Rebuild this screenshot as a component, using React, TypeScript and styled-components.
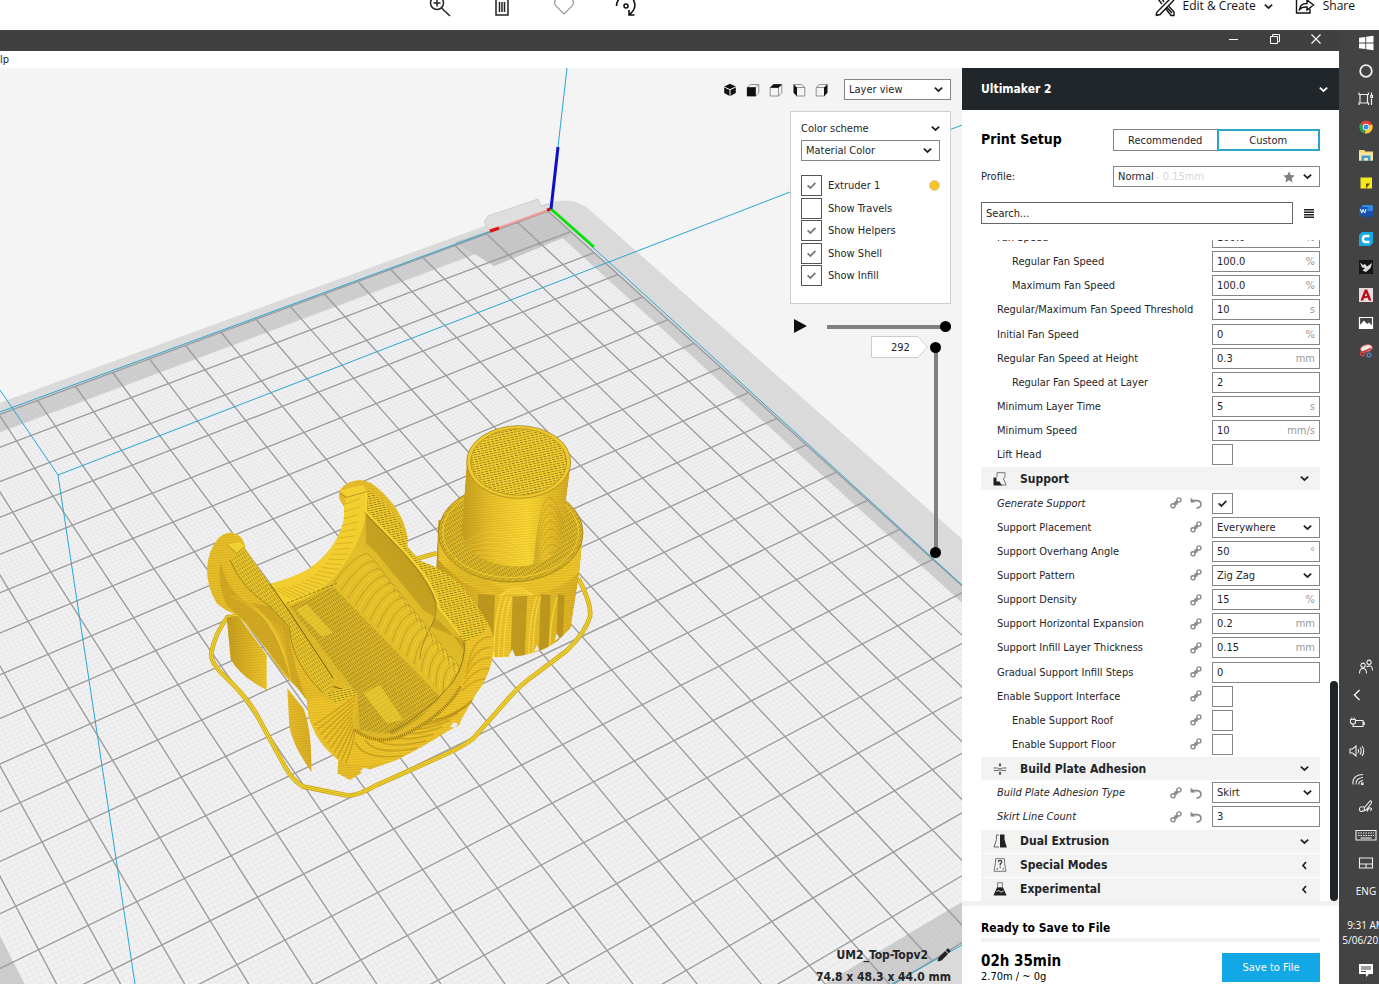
import React from "react";
import styled, { createGlobalStyle } from "styled-components";

const UI = '"DejaVu Sans Condensed", "Noto Sans", sans-serif';
const SYS = '"Open Sans", "Noto Sans", sans-serif';

const GlobalStyle = createGlobalStyle`
  *, *::before, *::after { box-sizing: border-box; }
  body { margin: 0; overflow: hidden; background: #fff; font-family: ${UI}; font-size: 11px; color: #1f2528; }
  button, input, select { font: inherit; color: inherit; margin: 0; padding: 0; border: 0; background: none; outline: none; border-radius: 0; }
  svg { display: block; flex: none; }
  h1, h2, p { margin: 0; }
`;

/* ---------- frame ---------- */
const Page = styled.div`
  display: flex;
  flex-direction: column;
  height: 100vh;
`;
const PhotoBar = styled.header`
  display: flex;
  flex: none;
  height: 30px;
  align-items: flex-start;
  justify-content: flex-end;
  padding-right: 24px;
  font-family: ${SYS};
  font-size: 12px;
  color: #111;
`;
const PhotoTools = styled.div`
  display: flex;
  flex: 1;
  justify-content: center;
  gap: 38px;
  padding-right: 88px;
`;
const PhotoButton = styled.button`
  display: flex;
  align-items: center;
  gap: 8px;
  height: 12px;
  line-height: 12px;
  & + & { margin-left: 22px; }
  & > svg:first-child { align-self: flex-start; }
`;
const IconButton = styled.button`
  display: flex;
  align-items: center;
  justify-content: center;
`;
const Desktop = styled.div`
  display: flex;
  flex: 1;
  min-height: 0;
`;
const AppWindow = styled.div`
  display: flex;
  flex-direction: column;
  flex: 1;
  min-width: 0;
`;
const TitleBar = styled.div`
  display: flex;
  flex: none;
  height: 21px;
  align-items: center;
  justify-content: flex-end;
  gap: 31px;
  padding: 0 18px 3px 0;
  background: #404040;
`;
const MenuBar = styled.nav`
  flex: none;
  height: 17px;
  line-height: 17px;
  background: #fff;
`;
const Workspace = styled.div`
  display: flex;
  flex: 1;
  min-height: 0;
`;

/* ---------- shared controls ---------- */
const SelectBox = styled.span<{ $w?: number }>`
  position: relative;
  display: flex;
  align-items: center;
  width: ${(p) => (p.$w ? p.$w + "px" : "100%")};
  height: 21px;
  border: 1px solid #868686;
  background: #fff;
  select { appearance: none; width: 100%; height: 100%; padding-left: 4px; }
  svg { position: absolute; right: 7px; pointer-events: none; }
`;
const Aside = styled.span`
  position: absolute;
  left: 42px;
  color: #d6d6d6;
  pointer-events: none;
`;
const StarSlot = styled.span`
  position: absolute;
  right: 24px;
  pointer-events: none;
  svg { position: static; }
`;
const CheckWrap = styled.span`
  display: grid;
  width: 21px;
  height: 21px;
  place-items: center;
  & > * { grid-area: 1 / 1; }
  input { appearance: none; width: 21px; height: 21px; border: 1px solid #868686; background: #fff; }
  svg { pointer-events: none; z-index: 1; }
`;

const Chevron = ({ color = "#222", left = false }: { color?: string; left?: boolean }) => (
  <svg width="9" height="9" viewBox="0 0 9 9" fill="none" stroke={color} strokeWidth="1.7">
    {left ? <path d="M6 1 L3 4.5 L6 8" /> : <path d="M.8 2.6 L4.5 6 L8.2 2.6" />}
  </svg>
);
function Select({ id, value, w, label, children }: { id?: string; value: string; w?: number; label?: string; children?: React.ReactNode }) {
  return (
    <SelectBox $w={w}>
      <select id={id} aria-label={label} defaultValue={value}>
        <option>{value}</option>
      </select>
      {children}
      <Chevron />
    </SelectBox>
  );
}
function Check({ id, on, color = "#222" }: { id: string; on?: boolean; color?: string }) {
  return (
    <CheckWrap>
      <input type="checkbox" id={id} defaultChecked={on} />
      {on && (
        <svg width="9" height="9" viewBox="0 0 9 9" fill="none" stroke={color} strokeWidth="1.8">
          <path d="M.6 4.4 L3.4 7 L8.4 1.8" />
        </svg>
      )}
    </CheckWrap>
  );
}

/* ---------- 3D viewport ---------- */
const Viewport = styled.main`
  position: relative;
  flex: 1;
  min-width: 0;
  overflow: hidden;
  background: #f4f4f4;
`;
const Scene = styled.svg`
  position: absolute;
  inset: 0;
  width: 100%;
  height: 100%;
`;
const Overlay = styled.div`
  position: relative;
  display: flex;
  flex-direction: column;
  align-items: flex-end;
  height: 100%;
  padding: 11px 11px 0 0;
`;
const ViewTools = styled.div`
  display: flex;
  align-items: center;
  gap: 9px;
  margin-bottom: 11px;
  & > span { margin-left: 6px; }
`;
const Legend = styled.section`
  width: 161px;
  height: 193px;
  padding: 9px 10px;
  border: 1px solid #cfcfcf;
  background: #fff;
`;
const LegendHead = styled.div`
  display: flex;
  align-items: center;
  justify-content: space-between;
  height: 14px;
  margin-bottom: 5px;
`;
const LegendList = styled.div`
  display: flex;
  flex-direction: column;
  justify-content: space-between;
  height: 111px;
  margin-top: 14px;
  input { border-color: #555; }
`;
const LegendRow = styled.div`
  display: flex;
  align-items: center;
  gap: 6px;
`;
const Swatch = styled.i`
  width: 11px;
  height: 11px;
  margin-left: auto;
  border: 1px solid #d8d0b0;
  border-radius: 50%;
  background: #f9c22b;
`;
const thumb = `
  appearance: none;
  width: 11px;
  height: 11px;
  border-radius: 50%;
  background: #000;
  pointer-events: auto;
`;
const PlayRow = styled.div`
  display: flex;
  align-items: center;
  gap: 20px;
  height: 22px;
  margin-top: 11px;
`;
const PathRange = styled.input`
  appearance: none;
  width: 124px;
  height: 11px;
  background: linear-gradient(#808080, #808080) 0 4px / 100% 4px no-repeat;
  &::-webkit-slider-thumb { ${thumb} }
`;
const LayerRow = styled.div`
  display: flex;
  gap: 1px;
  padding-right: 10px;
  margin-top: -1px;
`;
const LayerTag = styled.output`
  display: grid;
  height: 22px;
  align-items: center;
  & > * { grid-area: 1 / 1; }
  span { z-index: 1; padding-left: 20px; }
`;
const LayerSlider = styled.div`
  position: relative;
  width: 11px;
  height: 216px;
  margin-top: 6px;
  background: linear-gradient(#808080, #808080) 4px 5px / 4px 205px no-repeat;
`;
const LayerRange = styled.input`
  position: absolute;
  inset: 0;
  appearance: none;
  writing-mode: vertical-lr;
  direction: rtl;
  width: 11px;
  height: 216px;
  pointer-events: none;
  &::-webkit-slider-thumb { ${thumb} }
`;
const JobInfo = styled.div`
  display: flex;
  flex-direction: column;
  align-items: flex-end;
  margin-top: auto;
  font-size: 12px;
  font-weight: bold;
  line-height: 22px;
  height: 40px;
  div { display: flex; align-items: center; gap: 9px; }
`;

type Pt = [number, number];
/* projects build-plate cell coordinates (i to the left, j to the front) on the screen */
const project = (i: number, j: number): Pt => {
  const a = -0.00725 * i;
  const b = -0.0131 * j;
  const w = 1 + a + b;
  return [(548 + 4731 * a - 1165 * b) / w, (211 - 1341 * a - 1340 * b) / w];
};
const fmt = (p: Pt) => p[0].toFixed(1) + " " + p[1].toFixed(1);
const seg = (p: Pt, q: Pt) => "M" + fmt(p) + "L" + fmt(q);
const poly = (pts: Pt[]) => "M" + pts.map(fmt).join("L") + "Z";
const rect = (i0: number, j0: number, i1: number, j1: number) =>
  poly([project(i0, j0), project(i1, j0), project(i1, j1), project(i0, j1)]);

const NI = 22;
const NJ = 21;
function gridPath(step: number) {
  let d = "";
  for (let k = 0; k <= NI / step; k++) d += seg(project(k * step, 0), project(k * step, NJ));
  for (let k = 0; k <= NJ / step; k++) d += seg(project(0, k * step), project(NI, k * step));
  return d;
}
const MAJOR = gridPath(1);
const MINOR = gridPath(0.1);

const range = (n: number) => Array.from({ length: n }, (_, k) => k);

const BODY =
  "M85 385 Q105 366 130 369 Q155 374 165 405 L162 420 L240 522 Q300 508 355 478 Q440 420 462 330 L462 290 Q440 262 450 240 Q470 212 510 210 Q540 212 560 232 Q640 300 652 380 L652 410 L690 452 Q760 475 820 532 L862 590 L893 636 Q915 680 912 715 Q905 790 860 850 L830 885 L808 945 L770 965 Q700 1010 620 1050 L520 1085 L480 1110 L442 1090 L445 1050 Q380 1000 356 920 L350 870 L320 832 Q270 790 232 722 L165 640 L140 615 Q100 600 80 580 Q50 530 51 475 Q55 420 85 385 Z";
const BORE =
  "M528 305 L640 420 Q730 520 745 560 L830 660 Q840 740 800 800 Q730 900 640 960 Q560 1000 505 965 L490 960 L505 850 L430 800 L290 590 Q420 540 470 450 Q520 380 528 305 Z";
const FRONT =
  "M352 880 Q380 840 430 880 L500 856 Q480 900 490 955 Q540 1005 610 990 Q730 950 800 850 Q840 780 825 690 L893 640 Q915 680 912 715 Q905 790 860 850 L808 940 Q700 1010 600 1055 Q500 1080 445 1050 Q380 1000 356 920 Z";
const LOWER =
  "M745 330 L738 480 L860 590 L912 690 L912 742 Q1030 745 1100 695 L1142 655 L1168 490 L1180 360 Z";
const RIM = "M745 340 L745 450 Q840 560 975 560 Q1100 555 1168 485 L1180 360 Z";
const PIN = "M830 160 L815 365 Q830 455 965 470 Q1090 470 1112 395 L1142 165 Z";
const RAIL_R = "M528 240 Q600 270 652 380 L652 410 L690 452 Q760 475 820 532 L893 636 L880 670 L822 690 L745 590 Q735 540 640 420 L528 305 Z";
const RAIL_L = "M120 450 L165 415 L245 530 L430 805 L430 845 L400 850 Q320 760 298 650 L240 590 L180 545 Z";
const WALLS = "M110 622 L145 618 L230 735 L230 840 Q150 800 122 748 Z M292 835 L340 895 Q366 960 364 1085 Q310 1010 298 950 Z";

const SKIRT =
  "M1165 505 Q1205 580 1200 620 Q1185 670 1130 722 L1040 790 Q990 825 960 860 L850 985 Q820 1010 760 1036 L560 1125 Q500 1160 470 1156 L340 1130 Q310 1115 285 1070 L195 905 Q160 850 95 790 Q60 755 64 728 Q75 670 112 622 L150 618 M680 446 L740 430";

function Model() {
  return (
    <g transform="translate(190 410) scale(.33333)">
      <path d={SKIRT} fill="none" stroke="#c9a41c" strokeWidth="14" />
      <path d={SKIRT} fill="none" stroke="#f4d62f" strokeWidth="9" />
      <path d={SKIRT} fill="none" stroke="#a88a1c" strokeWidth="1.5" />

      {/* support walls under the bracket */}
      <path d={WALLS} fill="url(#wall)" />
      <path d={WALLS} fill="url(#layers)" />

      {/* stepped plug */}
      <clipPath id="clipLower"><path d={LOWER} /></clipPath>
      <g clipPath="url(#clipLower)">
        <path d={LOWER} fill="url(#wall)" />
        <path d={LOWER} fill="url(#layers)" />
        {[[865, 915], [968, 1012], [1052, 1082], [1104, 1124]].map(([x, y]) => (
          <path key={x} d={`M${x} 552 L${y} 556 L${y - 8} 740 L${x - 6} 740 Z`} fill="#a8861a" opacity=".65" />
        ))}
        {[925, 940, 955, 1030, 1042, 1092].map((x) => (
          <path key={x} d={`M${x - 14} 745 Q${x - 12} 620 ${x + 10} 560`} fill="none" stroke="#fbe04a" strokeWidth="4" opacity=".7" />
        ))}
      </g>
      <clipPath id="clipRim"><path d={RIM} /></clipPath>
      <g clipPath="url(#clipRim)">
        <path d={RIM} fill="#f0c82b" />
        <path d={RIM} fill="url(#layers)" />
        {range(9).map((k) => (
          <path key={k} d={`M${750 + k * 6} ${485 - k * 7} Q${850 + k * 6} ${500 + k * 4} ${880 + k * 14} ${575 - k}`} fill="none" stroke="#a5841a" strokeWidth="1.5" opacity=".5" />
        ))}
        {range(6).map((k) => (
          <path key={k} d={`M${930 - k * 4} 562 Q975 ${500 + k * 8} ${1030 + k * 4} 560`} fill="none" stroke="#ffe04a" strokeWidth="2" opacity=".7" />
        ))}
      </g>
      <ellipse cx="962" cy="368" rx="217" ry="148" fill="#e2bd29" stroke="#8a6e12" strokeWidth="2" />
      <ellipse cx="962" cy="368" rx="215" ry="146" fill="url(#hatchV)" />
      <ellipse cx="962" cy="366" rx="204" ry="137" fill="none" stroke="#f2cf2e" strokeWidth="3" />
      <clipPath id="clipPin"><path d={PIN} /></clipPath>
      <g clipPath="url(#clipPin)">
        <path d={PIN} fill="url(#cyl)" />
        <path d={PIN} fill="url(#layers)" />
        {range(11).map((k) => (
          <path key={k} d={`M${1030 + k * 2} 480 Q${1062 + k} ${90 + k * 44} ${1135 - k} ${400 + k * 6}`} fill="none" stroke="#a8841a" strokeWidth="2" opacity=".6" />
        ))}
        {range(7).map((k) => (
          <path key={k} d={`M820 ${400 + k * 9} Q950 ${300 + k * 26} 1060 ${480 + k * 5}`} fill="none" stroke="#ffe24e" strokeWidth="2" opacity=".5" />
        ))}
      </g>
      <ellipse cx="986" cy="156" rx="156" ry="109" fill="#f0ca2d" stroke="#94771a" strokeWidth="2" />
      <ellipse cx="986" cy="156" rx="144" ry="100" fill="#f0cd30" stroke="#8a7015" strokeWidth="1.5" />
      <ellipse cx="986" cy="156" rx="143" ry="99" fill="url(#hatchT)" />

      {/* half-pipe bracket */}
      <path d={BODY} fill="#ebc129" />
      <path d={BODY} fill="url(#layers)" />
      <path d="M92 455 Q80 520 110 585 L170 640 L320 832 L350 870 Q300 740 296 650 L240 590 L170 575 Q110 540 92 455 Z" fill="#b58f1a" opacity=".45" />
      {range(12).map((k) => (
        <path key={k} d={`M${120 + k * 14} ${560 + k * 8} Q${190 + k * 8} ${555 + k * 10} ${270 + k * 3} ${680 + k * 12}`} fill="none" stroke="#f5d236" strokeWidth="2" opacity=".6" />
      ))}
      <path d="M240 522 Q300 508 355 478 Q440 420 462 330 L462 290 L470 255 L528 245 L528 320 Q520 400 450 490 Q390 560 285 585 Z" fill="#f3ce2f" />
      {range(24).map((k) => {
        const t = k / 23;
        const x = 250 + 212 * Math.sin((t * Math.PI) / 2);
        const y = 535 - 275 * t * t;
        return <path key={k} d={`M${x} ${y} l${54 - t * 6} ${30 - t * 50}`} stroke="#b08a18" strokeWidth="1.8" opacity=".6" />;
      })}

      <clipPath id="clipBore"><path d={BORE} /></clipPath>
      <g clipPath="url(#clipBore)">
        <path d={BORE} fill="url(#bore)" />
        <path d={BORE} fill="url(#fine)" />
        <path d="M528 305 Q640 420 735 540 Q745 600 722 650 L822 690 L820 720 Q770 640 700 600 L560 430 L528 400 Z" fill="#a98719" opacity=".45" />
        <path d="M300 590 L430 530 L760 870 Q690 950 620 975 L510 960 L500 850 Z" fill="url(#hatchV)" />
        <path d="M318 600 L350 582 L428 668 L395 680 Z M520 850 L570 825 L640 930 L590 940 Z" fill="#f7d736" opacity=".55" />
        {range(34).map((k) => (
          <path
            key={k}
            d={`M${430 + k * 11} ${520 + k * 11} Q${486 + k * 9} ${440 + k * 11} ${530 + k * 9} ${430 + k * 11} Q${560 + k * 9} ${450 + k * 11} ${585 + k * 8} ${500 + k * 11}`}
            fill="none"
            stroke={k % 2 ? "#ffe044" : "#9c7b16"}
            strokeWidth="3"
            opacity=".45"
          />
        ))}
      </g>
      <path d={RAIL_R} fill="#efca2d" />
      <path d={RAIL_R} fill="url(#hatchT)" />
      <path d={RAIL_L} fill="#efca2d" />
      <path d={RAIL_L} fill="url(#hatchV)" />
      <path d="M528 245 L528 305 L640 420 Q735 520 745 590 L822 690" fill="none" stroke="#f5d436" strokeWidth="6" />
      <path d="M524 308 L636 424 Q722 520 738 580 Q742 620 720 655 Q690 710 690 750" fill="none" stroke="#8a6e14" strokeWidth="2" />
      <path d="M822 690 Q830 750 790 815 Q710 910 600 968" fill="none" stroke="#7e6512" strokeWidth="2.5" />
      <path d="M240 522 L298 605 L430 805 M430 830 L500 850" fill="none" stroke="#5f4b0c" strokeWidth="2.5" />
      <path d="M120 450 Q150 530 240 590 L298 650 Q305 760 400 850" fill="none" stroke="#8a6e14" strokeWidth="2" />
      <path d="M290 580 L440 520" fill="none" stroke="#6c560e" strokeWidth="2" strokeDasharray="10 4" />

      <clipPath id="clipFront"><path d={FRONT} /></clipPath>
      <g clipPath="url(#clipFront)">
        <path d={FRONT} fill="#f3c82b" />
        <path d={FRONT} fill="url(#layers)" />
        {range(10).map((k) => (
          <path key={k} d={`M${372 + k * 10} ${945 + k * 14} Q${420 + k * 9} ${915 + k * 7} ${500 - k} ${856 + k * 11}`} fill="none" stroke="#b48a15" strokeWidth="4" opacity=".6" />
        ))}
        {range(10).map((k) => (
          <path key={"f" + k} d={`M${496 + k * 30} ${985 + (k < 3 ? 12 : 0) - k * 7} Q${520 + k * 34} ${1055 - k * 17} ${660 + k * 24} ${1035 - k * 21}`} fill="none" stroke="#b28815" strokeWidth="5" opacity=".55" />
        ))}
        {range(5).map((k) => (
          <path key={"r" + k} d={`M${832 - k * 4} ${770 + k * 18} Q${850 + k * 3} ${680 + k * 30} ${905 - k * 2} ${680 + k * 32}`} fill="none" stroke="#bb9018" strokeWidth="5" opacity=".5" />
        ))}
      </g>
      <path d="M495 960 Q560 1010 640 975 Q760 920 812 830" fill="none" stroke="#725b10" strokeWidth="10" strokeDasharray="3 3" opacity=".7" />
      <path d="M806 680 L830 655 L893 640 L880 670 L825 695 Z M410 850 L480 830 L505 855 L430 882 Z" fill="#ecca2e" />
      <path d="M806 680 L830 655 L893 640 L880 670 L825 695 Z M410 850 L480 830 L505 855 L430 882 Z" fill="url(#hatchT)" />
      <path d="M112 405 L150 395 L165 410 L140 430 Z M450 240 L520 225 L530 245 L470 262 Z" fill="#f3d032" />
      <path d="M112 405 L140 430 L165 410 M450 250 L470 262 L530 245" fill="none" stroke="#a08018" strokeWidth="2" />
      <path d="M510 1085 l10 -12 l18 4 l-6 14 Z M780 950 l12 -14 l12 6 l-10 12 Z M955 740 l12 -22 l10 24 Z M1032 725 l8 -20 l8 14 Z M1094 692 l6 -22 l8 14 Z" fill="#ececf0" />
    </g>
  );
}

function BuildScene() {
  return (
    <Scene viewBox="0 68 962 916" preserveAspectRatio="xMaxYMin slice" aria-label="Build plate">
      <defs>
        <pattern id="layers" width="6" height="5" patternUnits="userSpaceOnUse" patternTransform="rotate(3)">
          <rect width="6" height="1.6" fill="#8f7012" opacity=".3" />
        </pattern>
        <pattern id="fine" width="5" height="5" patternUnits="userSpaceOnUse" patternTransform="rotate(45)">
          <rect width="5" height="1.6" fill="#806610" opacity=".35" />
        </pattern>
        <pattern id="hatchV" width="6" height="12" patternUnits="userSpaceOnUse" patternTransform="rotate(-32)">
          <rect width="2" height="9" fill="#54430a" opacity=".6" />
        </pattern>
        <pattern id="hatchT" width="12" height="7" patternUnits="userSpaceOnUse" patternTransform="rotate(-12)">
          <rect width="9" height="2.2" fill="#54430a" opacity=".65" />
        </pattern>
        <linearGradient id="cyl">
          <stop offset="0" stopColor="#c9a01e" />
          <stop offset=".3" stopColor="#f0c72a" />
          <stop offset=".6" stopColor="#ffdb33" />
          <stop offset="1" stopColor="#d6ab21" />
        </linearGradient>
        <linearGradient id="wall">
          <stop offset="0" stopColor="#c79e1d" />
          <stop offset=".5" stopColor="#f4ca2b" />
          <stop offset="1" stopColor="#dcb023" />
        </linearGradient>
        <linearGradient id="bore" x1="0" y1="1" x2="1" y2="0">
          <stop offset="0" stopColor="#e0ba29" />
          <stop offset=".6" stopColor="#f0cb2d" />
          <stop offset="1" stopColor="#c39c1d" />
        </linearGradient>
      </defs>

      <path d={`M${fmt(project(24, -0.4))} L545 204 Q575 194 592 212 L${fmt(project(-1, 3))} L${fmt(project(-1, 24))} L${fmt(project(24, 24))} Z`} fill="#dadada" />
      <path d="M484 222 L488 216 L538 199 L541 206 L551 204 L548 210 L490 231 Z" fill="#dedede" stroke="#d0d0d0" />
      <path d={rect(0, 0, NI, NJ)} fill="#cbcbcb" />
      <path d={rect(0.35, 0.55, NI - 0.5, NJ - 0.6)} fill="#f1f1f2" />
      <path d="M455 242 L548 211 L573 234 L494 266 Z" fill="#c2c2c2" />
      <path d={MINOR} stroke="#d8d8de" strokeWidth=".35" />
      <path d={MAJOR} stroke="#9e9e9e" strokeWidth="1.4" />

      <g stroke="#2aa6d2" strokeWidth="1" fill="none">
        <path d="M551 209 L0 412 M551 209 L962 585 M558 147 L567 68" />
        <path d="M0 390 L58 475 L135 984 M58 475 L790 192 L962 125 M962 945 L892 984" />
      </g>
      <path d="M551 209 L490 231" stroke="#f59a9a" strokeWidth="2" />
      <path d="M499 228 L490 231 M551 209 L547 210" stroke="#e01010" strokeWidth="3" />
      <path d="M551 209 L594 247" stroke="#0be00b" strokeWidth="3" />
      <path d="M551 209 L558 147" stroke="#1010c8" strokeWidth="3" />
      <Model />
    </Scene>
  );
}

const CubeIcon = ({ face }: { face: string }) => (
  <svg width="14" height="14" viewBox="0 0 14 14" fill="none" stroke="#777" strokeWidth=".8" strokeLinejoin="round">
    {face === "3d" ? (
      <>
        <path d="M7 .8 L12.8 3.6 V10 L7 13.2 L1.2 10 V3.6 Z" fill="#111" stroke="none" />
        <path d="M1.2 4 L7 6.6 L12.8 4 M7 6.6 V13.2" stroke="#f4f4f4" strokeWidth="1" />
      </>
    ) : face === "left" || face === "right" ? (
      <g transform={face === "right" ? "translate(14 0) scale(-1 1)" : undefined}>
        <path d="M4.5 4.5 H12.8 V13 H4.5 Z M1.5 1.5 H9.5 L12.8 4.5" />
        <path d="M1.5 1.2 L5 4.5 V13.2 L1.5 9.8 Z" fill="#111" stroke="none" />
      </g>
    ) : (
      <>
        <path d="M1.2 4.5 H9.5 V13 H1.2 Z M1.2 4.5 L4.5 1.5 H12.8 L9.5 4.5 M12.8 1.5 V9.8 L9.5 13" />
        {face === "front" ? (
          <path d="M1 4.3 H9.7 V13.2 H1 Z" fill="#111" stroke="none" />
        ) : (
          <path d="M1 4.7 L4.5 1.2 H13 L9.5 4.7 Z" fill="#111" stroke="none" />
        )}
      </>
    )}
  </svg>
);

const LEGEND: [string, boolean][] = [
  ["Extruder 1", true],
  ["Show Travels", false],
  ["Show Helpers", true],
  ["Show Shell", true],
  ["Show Infill", true],
];

function Preview() {
  return (
    <Viewport>
      <BuildScene />
      <Overlay>
        <ViewTools>
          {["3d", "front", "top", "left", "right"].map((f) => (
            <IconButton key={f} aria-label={f + " view"}><CubeIcon face={f} /></IconButton>
          ))}
          <Select value="Layer view" w={107} label="View mode" />
        </ViewTools>
        <Legend>
          <LegendHead><label htmlFor="scheme">Color scheme</label><Chevron /></LegendHead>
          <Select id="scheme" value="Material Color" />
          <LegendList>
            {LEGEND.map(([name, on], k) => (
              <LegendRow key={name}>
                <Check id={"lg" + k} on={on} color="#777" />
                <label htmlFor={"lg" + k}>{name}</label>
                {k === 0 && <Swatch />}
              </LegendRow>
            ))}
          </LegendList>
        </Legend>
        <PlayRow>
          <IconButton aria-label="Play">
            <svg width="13" height="14" viewBox="0 0 13 14"><path d="M0 0 L13 7 L0 14 Z" fill="#111" /></svg>
          </IconButton>
          <PathRange type="range" aria-label="Path" min={0} max={100} defaultValue={100} />
        </PlayRow>
        <LayerRow>
          <LayerTag>
            <svg width="58" height="22" viewBox="0 0 58 22"><path d="M.5 .5 H47 L56.5 11 L47 21.5 H.5 Z" fill="#fff" stroke="#ccc" /></svg>
            <span>292</span>
          </LayerTag>
          <LayerSlider>
            <LayerRange type="range" aria-label="Top layer" min={1} max={292} defaultValue={292} />
            <LayerRange type="range" aria-label="Bottom layer" min={1} max={292} defaultValue={1} />
          </LayerSlider>
        </LayerRow>
        <JobInfo>
          <div>
            UM2_Top-Topv2
            <svg width="14" height="14" viewBox="0 0 14 14" fill="#222"><path d="M.5 13.5 L1.6 9.4 L8 3 L11 6 L4.6 12.4 Z M8.8 2.2 L10.2 .8 Q11 .2 11.8 .9 L13.1 2.2 Q13.8 3 13.2 3.8 L11.8 5.2 Z" /></svg>
          </div>
          <p>74.8 x 48.3 x 44.0 mm</p>
        </JobInfo>
      </Overlay>
    </Viewport>
  );
}

/* ---------- settings sidebar ---------- */
const Sidebar = styled.aside`
  display: flex;
  flex-direction: column;
  flex: none;
  width: 377px;
  background: #fff;
`;
const Machine = styled.button`
  display: flex;
  flex: none;
  align-items: center;
  justify-content: space-between;
  height: 42px;
  padding: 0 11px 0 19px;
  background: #20262a;
  color: #fff;
  font-weight: bold;
  font-size: 12px;
`;
const Setup = styled.section`
  display: grid;
  grid-template-columns: 1fr 207px;
  align-items: center;
  row-gap: 15px;
  padding: 19px 19px 0;
  h1 { font-size: 14px; line-height: 16px; padding-bottom: 3px; color: #000; }
`;
const Tabs = styled.div`
  display: grid;
  grid-template-columns: 1fr 1fr;
`;
const Tab = styled.button<{ $on?: boolean }>`
  height: 22px;
  border: ${(p) => (p.$on ? "2px solid #2ba5c9" : "1px solid #868686")};
  border-right-width: ${(p) => (p.$on ? "2px" : "0")};
`;
const SearchRow = styled.div`
  display: flex;
  grid-column: 1 / -1;
  align-items: center;
  gap: 11px;
  padding-right: 6px;
  input { flex: 1; min-width: 0; height: 22px; padding: 0 4px; border: 1px solid #666; }
  input::placeholder { color: #222; opacity: 1; }
`;
const Scroller = styled.div`
  position: relative;
  flex: 1;
  min-height: 0;
  margin-top: 16px;
  padding: 0 19px;
  overflow: hidden;
`;
const List = styled.div`
  display: flex;
  flex-direction: column;
  justify-content: space-between;
  height: calc(100% + 14px);
  margin-top: -14px;
`;
const ScrollThumb = styled.div`
  position: absolute;
  right: 1px;
  bottom: 0;
  width: 8px;
  height: 220px;
  border-radius: 4px;
  background: #1f2526;
`;
const Row = styled.div<{ $indent?: boolean; $changed?: boolean }>`
  display: flex;
  flex: none;
  align-items: center;
  height: 23px;
  padding-left: ${(p) => (p.$indent ? "31px" : "16px")};
  label { flex: 1; white-space: nowrap; font-style: ${(p) => (p.$changed ? "italic" : "normal")}; }
`;
const RowIcons = styled.span`
  display: flex;
  gap: 8px;
  margin-right: 10px;
`;
const Control = styled.span`
  display: flex;
  flex: none;
  width: 108px;
`;
const Field = styled.span`
  display: flex;
  align-items: center;
  width: 100%;
  height: 21px;
  padding: 0 4px;
  border: 1px solid #868686;
  input { flex: 1; min-width: 0; height: 100%; }
  span { color: #999; }
`;
const Category = styled.button`
  display: flex;
  flex: none;
  align-items: center;
  height: 23px;
  padding: 0 11px 0 12px;
  background: #f3f3f3;
  font-size: 12px;
  font-weight: bold;
  span { flex: 1; padding-left: 13px; text-align: left; }
`;
const Footer = styled.footer`
  flex: none;
  padding: 15px 19px 1px;
  border-top: 5px solid #f1f1f1;
  color: #000;
`;
const Status = styled.h2`
  height: 17px;
  font-size: 12px;
  line-height: 15px;
`;
const Progress = styled.div`
  height: 4px;
  background: #f1f1f1;
`;
const SaveRow = styled.div`
  display: flex;
  justify-content: space-between;
  padding-top: 11px;
`;
const PrintTime = styled.p`
  font-size: 15px;
  font-weight: bold;
  line-height: 17px;
`;
const SaveButton = styled.button`
  width: 98px;
  height: 29px;
  background: #12a8e6;
  color: #fff;
`;

const LinkIcon = () => (
  <svg width="12" height="12" viewBox="0 0 12 12" fill="none" stroke="#888" strokeWidth="1.4">
    <circle cx="3" cy="8.8" r="2.1" /><circle cx="8.9" cy="3" r="2.1" /><path d="M4 7.8 L8 4" /><circle cx="6" cy="6" r="1.3" />
  </svg>
);
const ResetIcon = () => (
  <svg width="12" height="12" viewBox="0 0 12 12" fill="none" stroke="#888" strokeWidth="1.6">
    <path d="M2 3.6 H7 Q11 4 11 7.3 Q11 10.6 6.4 11.2" /><path d="M.6 .6 V5.6 H5.4 Z" fill="#888" stroke="none" />
  </svg>
);
const StarIcon = () => (
  <svg width="12" height="12" viewBox="0 0 12 12" fill="#808080"><path d="M6 .3 L7.7 4.1 L11.8 4.5 L8.7 7.3 L9.6 11.5 L6 9.3 L2.4 11.5 L3.3 7.3 L.2 4.5 L4.3 4.1 Z" /></svg>
);

const CategoryIcon = ({ name }: { name: string }) => (
  <svg width="14" height="14" viewBox="0 0 14 14" fill="none" stroke="#333" strokeWidth="1">
    {name === "Support" && <><path d="M4 .7 H12 V4.5 L10.5 7 L13.2 13 H8" stroke="#777" /><path d="M4 .7 V5" stroke="#777" /><path d="M.5 13.5 V5.5 H3.5 V9.5 H6.5 L9 13.5 Z" fill="#222" stroke="none" /></>}
    {name === "Build Plate Adhesion" && <><path d="M.5 6 H4.5 L7 7 L9.5 6 H13.5 M1 8.5 H5 L7 7.8 L9 8.5 H13" stroke="#666" /><path d="M7 1 V4 M7 13 V10" /><path d="M5.5 2.8 H8.5 L7 4.8 Z M5.5 11.4 H8.5 L7 9.4 Z" fill="#333" stroke="none" /></>}
    {name === "Dual Extrusion" && <><path d="M6 1 H3.5 V5.5 L1 13 H6" stroke="#666" /><path d="M7 .5 H11.5 V5.5 L13.8 13.5 H7 Z" fill="#222" stroke="none" /></>}
    {name === "Special Modes" && <><path d="M2.5 .7 H11.5 V5 L13 13.3 H1 L2.5 5 Z" stroke="#777" /><path d="M5.2 4 Q5.4 2.4 7 2.4 Q8.8 2.4 8.8 4 Q8.8 5 7.2 5.8 V7.6 M7.2 8.8 V10 M3.5 11 H5 M9.5 11 H11" strokeWidth="1.2" /></>}
    {name === "Experimental" && <><path d="M4.6 .7 H9.4 V6 H4.6 Z" stroke="#777" /><path d="M4 5.5 H10 L13.6 13.5 H.4 Z" fill="#222" stroke="none" /><path d="M3.5 9.5 L5.5 8.5 L8 10.2 L10.5 8.8" stroke="#ddd" /></>}
  </svg>
);

type Setting = {
  name: string;
  cat?: "open" | "closed";
  indent?: boolean;
  changed?: boolean;
  link?: boolean;
  value?: string;
  unit?: string;
  pick?: string;
  tick?: boolean;
};
const SETTINGS: Setting[] = [
  { name: "Fan Speed", value: "100.0", unit: "%" },
  { name: "Regular Fan Speed", indent: true, value: "100.0", unit: "%" },
  { name: "Maximum Fan Speed", indent: true, value: "100.0", unit: "%" },
  { name: "Regular/Maximum Fan Speed Threshold", value: "10", unit: "s" },
  { name: "Initial Fan Speed", value: "0", unit: "%" },
  { name: "Regular Fan Speed at Height", value: "0.3", unit: "mm" },
  { name: "Regular Fan Speed at Layer", indent: true, value: "2" },
  { name: "Minimum Layer Time", value: "5", unit: "s" },
  { name: "Minimum Speed", value: "10", unit: "mm/s" },
  { name: "Lift Head", tick: false },
  { name: "Support", cat: "open" },
  { name: "Generate Support", changed: true, link: true, tick: true },
  { name: "Support Placement", link: true, pick: "Everywhere" },
  { name: "Support Overhang Angle", link: true, value: "50", unit: "°" },
  { name: "Support Pattern", link: true, pick: "Zig Zag" },
  { name: "Support Density", link: true, value: "15", unit: "%" },
  { name: "Support Horizontal Expansion", link: true, value: "0.2", unit: "mm" },
  { name: "Support Infill Layer Thickness", link: true, value: "0.15", unit: "mm" },
  { name: "Gradual Support Infill Steps", link: true, value: "0" },
  { name: "Enable Support Interface", link: true, tick: false },
  { name: "Enable Support Roof", indent: true, link: true, tick: false },
  { name: "Enable Support Floor", indent: true, link: true, tick: false },
  { name: "Build Plate Adhesion", cat: "open" },
  { name: "Build Plate Adhesion Type", changed: true, link: true, pick: "Skirt" },
  { name: "Skirt Line Count", changed: true, link: true, value: "3" },
  { name: "Dual Extrusion", cat: "open" },
  { name: "Special Modes", cat: "closed" },
  { name: "Experimental", cat: "closed" },
];

function SettingRow({ s, id }: { s: Setting; id: string }) {
  if (s.cat)
    return (
      <Category>
        <CategoryIcon name={s.name} />
        <span>{s.name}</span>
        <Chevron left={s.cat === "closed"} />
      </Category>
    );
  return (
    <Row $indent={s.indent} $changed={s.changed}>
      <label htmlFor={id}>{s.name}</label>
      <RowIcons>
        {s.link && <LinkIcon />}
        {s.changed && <ResetIcon />}
      </RowIcons>
      <Control>
        {s.pick && <Select id={id} value={s.pick} />}
        {s.tick !== undefined && <Check id={id} on={s.tick} />}
        {s.value && (
          <Field>
            <input id={id} defaultValue={s.value} />
            {s.unit && <span>{s.unit}</span>}
          </Field>
        )}
      </Control>
    </Row>
  );
}

function Settings() {
  return (
    <Sidebar>
      <Machine>Ultimaker 2<Chevron color="#fff" /></Machine>
      <Setup>
        <h1>Print Setup</h1>
        <Tabs>
          <Tab>Recommended</Tab>
          <Tab $on>Custom</Tab>
        </Tabs>
        <label htmlFor="profile">Profile:</label>
        <Select id="profile" value="Normal">
          <Aside>- 0.15mm</Aside>
          <StarSlot><StarIcon /></StarSlot>
        </Select>
        <SearchRow>
          <input aria-label="Search settings" placeholder="Search..." />
          <IconButton aria-label="Setting visibility">
            <svg width="10" height="9" viewBox="0 0 10 9" fill="#222"><path d="M0 0h10v1.5H0z M0 2.5h10v1.5H0z M0 5h10v1.5H0z M0 7.5h10v1.5H0z" /></svg>
          </IconButton>
        </SearchRow>
      </Setup>
      <Scroller>
        <List>
          {SETTINGS.map((s, k) => <SettingRow key={s.name} s={s} id={"set" + k} />)}
        </List>
        <ScrollThumb />
      </Scroller>
      <Footer>
        <Status>Ready to Save to File</Status>
        <Progress />
        <SaveRow>
          <div>
            <PrintTime>02h 35min</PrintTime>
            <p>2.70m / ~ 0g</p>
          </div>
          <SaveButton>Save to File</SaveButton>
        </SaveRow>
      </Footer>
    </Sidebar>
  );
}

/* ---------- taskbar ---------- */
const TaskbarClip = styled.aside`
  flex: none;
  width: 40px;
  overflow: hidden;
  background: #434343;
`;
const Taskbar = styled.div`
  display: flex;
  flex-direction: column;
  align-items: center;
  width: 54px;
  height: 100%;
  color: #fff;
  font-family: ${SYS};
  font-size: 10px;
`;
const Apps = styled.div`
  display: flex;
  flex-direction: column;
  gap: 12px;
  padding-top: 5px;
`;
const Tray = styled.div`
  display: flex;
  flex-direction: column;
  align-items: center;
  margin-top: auto;
`;
const TraySlot = styled.button<{ $left?: boolean }>`
  display: flex;
  align-items: center;
  justify-content: center;
  height: 28px;
  margin-right: ${(p) => (p.$left ? "18px" : "0")};
`;
const Clock = styled.time`
  display: block;
  padding: 13px 0 8px;
  line-height: 15px;
  text-align: center;
  white-space: nowrap;
`;

const APPS: [string, React.ReactNode][] = [
  ["Start", <path key="a" d="M1 2.8 L7.3 2 V7.6 H1 Z M8.2 1.8 L15.5 .8 V7.6 H8.2 Z M1 8.5 H7.3 V14 L1 13.2 Z M8.2 8.5 H15.5 V15.2 L8.2 14.2 Z" fill="#fff" />],
  ["Search", <circle key="a" cx="8" cy="8" r="5.8" fill="none" stroke="#eee" strokeWidth="1.8" />],
  ["Task view", <path key="a" d="M1 1.500 V3.500 H10.500 V1.500 M2 3.500 V12 M9.500 3.500 V12 M1 14 V12 H10.500 V14 M13.500 1.500 V4 M13.500 7.500 V14 M12.800 4.500 H14.500 V6.500 H12.800 Z" fill="none" stroke="#eee" strokeWidth="1.2" />],
  ["Chrome", <g key="a"><circle cx="8" cy="8" r="6.5" fill="#e34133" /><path d="M8 8 L2.2 5 A6.5 6.5 0 0 0 7 14.4 Z" fill="#2da14e" /><path d="M8 8 L14 5.3 A6.5 6.5 0 0 1 7 14.4 Z" fill="#fccc2e" /><circle cx="8" cy="8" r="3.2" fill="#fff" /><circle cx="8" cy="8" r="2.5" fill="#4286f0" /></g>],
  ["Files", <g key="a"><path d="M1 3 H6 L7.5 4.5 H15 V13.5 H1 Z" fill="#f8d978" /><path d="M1 6 H15 V13.5 H1 Z" fill="#fbe7a4" /><path d="M3.5 14 V8.5 H12.5 V14 H10 V11 H6 V14 Z" fill="#3aa0d8" /></g>],
  ["Notes", <g key="a"><path d="M2.5 2.5 H14 V13.5 H2.5 Z" fill="#f8e71c" /><path d="M8 13.5 V8.5 H12 L8 13.5" fill="#5b5200" /></g>],
  ["Word", <g key="a"><path d="M4 2 H15 V14 H4 Z" fill="#2f8be0" /><path d="M4 8 H15 V14 H4 Z" fill="#1a4fa8" /><path d="M1 4 H9.5 V12 H1 Z" fill="#1857b8" /><path d="M2.5 6 L3.7 10 L5.2 6.5 L6.7 10 L8 6" fill="none" stroke="#fff" /></g>],
  ["Cura", <g key="a"><path d="M4 1 H15 V12 L12 15 H1 V4 Z" fill="#16a8e0" /><path d="M11.5 5 H7.5 Q5 5 5 8 Q5 11 7.5 11 H11.5" fill="none" stroke="#fff" strokeWidth="2.4" /></g>],
  ["Rhino", <g key="a"><path d="M1 1 H15 V15 H1 Z" fill="#161616" /><path d="M2 3.500 L5 6 L7 5 L9 7.500 L14 4 L12.500 9 L8 13 L4.500 11.500 L7 9 L4 8.500 Z" fill="#ddd" /></g>],
  ["AutoCAD", <g key="a"><path d="M1 1 H15 V15 H1 Z" fill="#eadcdc" /><path d="M2.5 13.5 L6.8 2.5 H9.2 L13.5 13.5 H10.8 L8 6 L5.2 13.5 Z M5 9.5 L11 8.5 V10.5 L5 11.5 Z" fill="#b4121b" /></g>],
  ["Photos", <g key="a"><path d="M1.5 2.5 H14.5 V13.5 H1.5 Z" fill="#444" stroke="#fff" strokeWidth="1.2" /><path d="M2 13 V10 L6 5.5 L9 9 L11 7.5 L14 10.5 V13 Z" fill="#fff" /></g>],
  ["Snip", <g key="a"><ellipse cx="8.5" cy="5.5" rx="6" ry="3.500" fill="#f3eaea" stroke="#d8575a" strokeWidth="1" transform="rotate(-15 8 6)" /><path d="M4 9.500 L13 5.500" stroke="#c5363b" strokeWidth="1.4" fill="none" /><circle cx="4.500" cy="11" r="1.900" fill="none" stroke="#d8474b" strokeWidth="1.400" /><circle cx="11" cy="12" r="1.900" fill="none" stroke="#5584b8" strokeWidth="1.400" /></g>],
];
const TRAY: [string, boolean, React.ReactNode][] = [
  ["People", false, <path key="a" d="M5 8.500 a2.200 2.200 0 1 1 .1 0 M1.500 14.500 Q1.500 9.500 5 9.500 Q8.500 9.500 8.500 14.500 M11 5.500 a2.200 2.200 0 1 1 .1 0 M8.500 8 Q14.500 4.500 14.500 11.500" />],
  ["Show hidden icons", true, <path key="a" d="M10.5 3 L5.5 8 L10.5 13" strokeWidth="1.5" />],
  ["Battery", true, <path key="a" d="M6.5 5.5 H14 V11.5 H6.5 M14 7.5 h1.3 v2 H14 M1.5 4.5 H6.5 V7 Q6.5 9 4 9 Q1.5 9 1.5 7 Z M2.8 4.5 V2.5 M5.2 4.5 V2.5 M4 9 V11.5 H7" />],
  ["Volume", true, <path key="a" d="M1 6 H3.5 L7 3 V13 L3.5 10 H1 Z M9 6 Q10.5 8 9 10 M11 4.5 Q13.5 8 11 11.5 M13 3 Q16.5 8 13 13" />],
  ["Network", true, <path key="a" d="M4 13.500 Q3 4 14 3.500 M7 13.500 Q6.500 7 14 6.500 M9.800 13.500 Q9.500 10 14 9.500 M12.500 13.500 h1.500 v-1.500 h-1.500 Z" />],
  ["Pen", false, <path key="a" d="M6 8 Q1 7 1.5 10.5 Q2 14 5 11.5 M6 12 L6.5 8.5 L12 2 Q14 1.5 13.5 4 L8.5 10.5 Z M9 12.5 Q11 8 12.5 9 Q15 10 12 11.5" />],
  ["Keyboard", false, <g key="a"><path d="M-2 3.500 H18 V13 H-2 Z" /><path d="M0 6 H16 M0 8.500 H16" strokeDasharray="1.500 1" /><path d="M2.500 11 H13.500" /></g>],
  ["Touchpad", false, <path key="a" d="M1.5 3 H14.5 V13 H1.5 Z M1.5 9 H14.5 M8 9 V13" />],
];

export default function App() {
  return (
    <Page>
      <GlobalStyle />
      <PhotoBar>
        <PhotoTools>
          <IconButton aria-label="Zoom in"><svg width="24" height="17" viewBox="0 0 24 17" fill="none" stroke="#222" strokeWidth="1.5"><circle cx="9" cy="3" r="6.5" /><path d="M5.5 3 H12.5 M9 -.5 V6.5 M13.5 8 L22 16" /></svg></IconButton>
          <IconButton aria-label="Delete"><svg width="24" height="17" viewBox="0 0 24 17" fill="none" stroke="#222" strokeWidth="1.5"><path d="M6 0 V15 H18 V0 M9.5 2 V12 M12 2 V12 M14.5 2 V12" /></svg></IconButton>
          <IconButton aria-label="Favourite"><svg width="24" height="17" viewBox="0 0 24 17" fill="none" stroke="#999" strokeWidth="1.2"><path d="M12 14 L3.5 5.5 Q1.5 2 4 -1 M12 14 L20.5 5.5 Q22.5 2 20 -1" /></svg></IconButton>
          <IconButton aria-label="Rotate"><svg width="24" height="17" viewBox="0 0 24 17" fill="none" stroke="#111" strokeWidth="1.6"><circle cx="12" cy="6" r="2" /><path d="M2.5 6 Q2.5 2 5 -1 M19 -1 Q24 8 15.5 14.5 M15 10 V15 H20.5" /></svg></IconButton>
        </PhotoTools>
        <PhotoButton>
          <svg width="20" height="17" viewBox="0 0 20 17" fill="none" stroke="#111" strokeWidth="1.4"><path d="M1 15.5 L2 12 L15 -1 M1 15.5 L5 14.5 L19 0 M3 -1 L7 4 M7 -1 L9 2 M11 9 L16 15.5 L19 15.5 V12 L14 6.5 M12 7.5 L17 13" /></svg>
          <span>Edit &amp; Create</span>
          <Chevron />
        </PhotoButton>
        <PhotoButton>
          <svg width="20" height="17" viewBox="0 0 20 17" fill="none" stroke="#111" strokeWidth="1.4"><path d="M1.5 0 V13 H15 V9 M4.5 9.5 Q5 3.5 12 3.5 V0 L18.5 5 L12 10 V7 Q7 6.5 4.5 9.5 Z" /></svg>
          <span>Share</span>
        </PhotoButton>
      </PhotoBar>
      <Desktop>
        <AppWindow>
          <TitleBar>
            <IconButton aria-label="Minimize"><svg width="10" height="10" viewBox="0 0 10 10" stroke="#fff"><path d="M0 5.5 H9" /></svg></IconButton>
            <IconButton aria-label="Restore"><svg width="10" height="10" viewBox="0 0 10 10" fill="none" stroke="#fff"><path d="M.5 2.5 H7.5 V9.5 H.5 Z M2.5 2 V.5 H9.5 V7.5 H8" /></svg></IconButton>
            <IconButton aria-label="Close"><svg width="10" height="10" viewBox="0 0 10 10" stroke="#fff" strokeWidth="1.2"><path d="M.5 .5 L9.5 9.5 M9.5 .5 L.5 9.5" /></svg></IconButton>
          </TitleBar>
          <MenuBar>lp</MenuBar>
          <Workspace>
            <Preview />
            <Settings />
          </Workspace>
        </AppWindow>
        <TaskbarClip>
          <Taskbar>
            <Apps>
              {APPS.map(([name, art]) => (
                <IconButton key={name} aria-label={name}><svg width="16" height="16" viewBox="0 0 16 16">{art}</svg></IconButton>
              ))}
            </Apps>
            <Tray>
              {TRAY.map(([name, left, art]) => (
                <TraySlot key={name} $left={left} aria-label={name}><svg width="16" height="16" viewBox="0 0 16 16" overflow="visible" fill="none" stroke="#eee" strokeWidth="1.1">{art}</svg></TraySlot>
              ))}
              <TraySlot>ENG</TraySlot>
              <Clock>9:31 AM<br />5/06/2020</Clock>
              <TraySlot aria-label="Notifications"><svg width="16" height="16" viewBox="0 0 16 16"><path d="M1 2 H15 V12 H11 L8 15 V12 H1 Z" fill="#fff" /><path d="M3 5 H13 M3 7 H13 M3 9.5 H8" stroke="#434343" /></svg></TraySlot>
            </Tray>
          </Taskbar>
        </TaskbarClip>
      </Desktop>
    </Page>
  );
}
